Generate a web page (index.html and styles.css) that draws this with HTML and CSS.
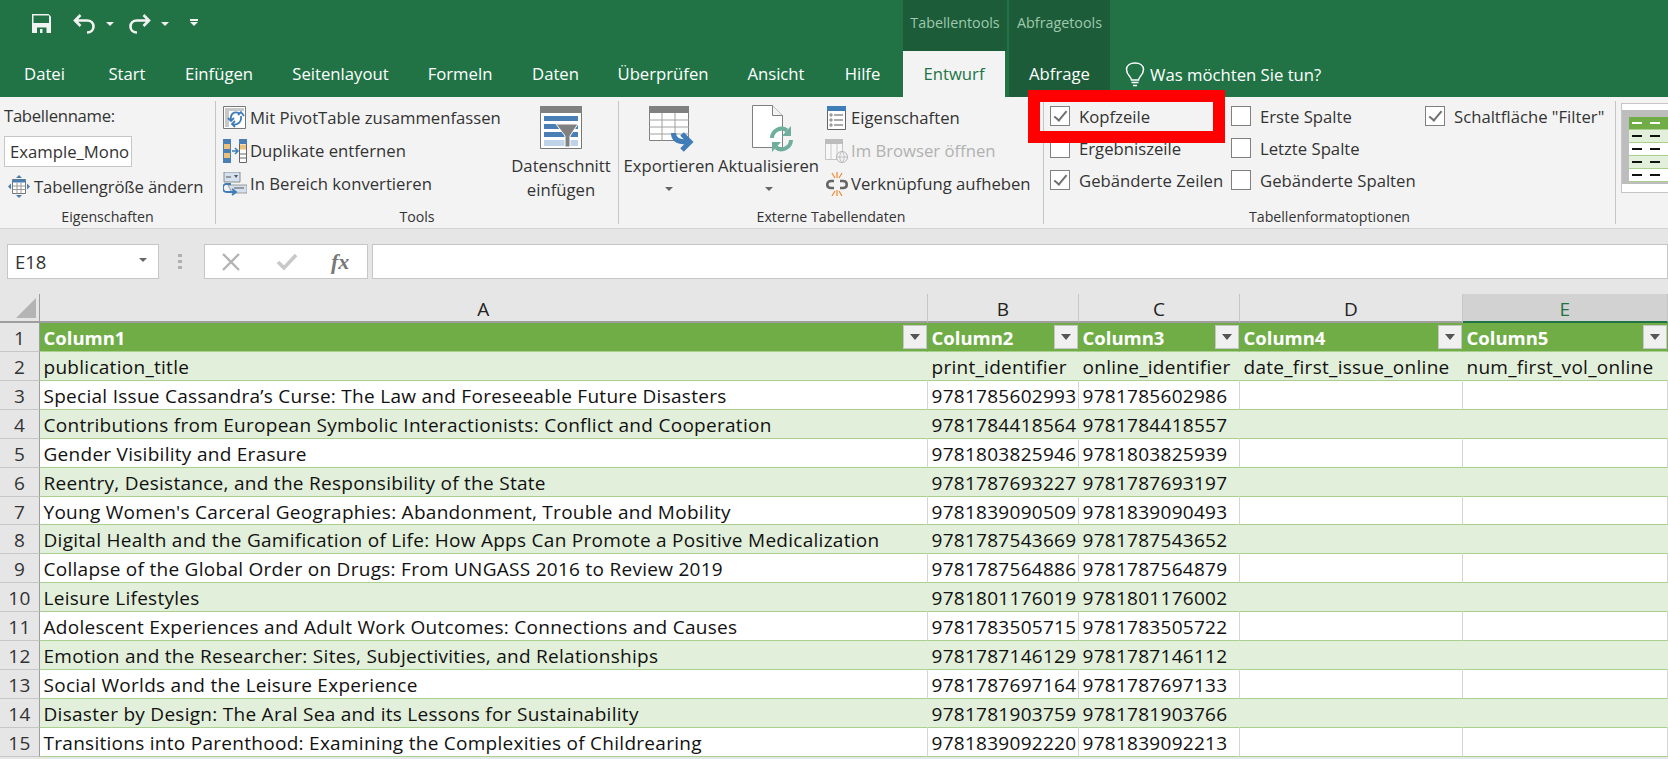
FILE: index.html
```html
<!DOCTYPE html>
<html>
<head>
    <title>Excel Tabellentools</title>
    <link rel="stylesheet" href="styles.css">
</head>
<body>

<div class="app">

    <!-- title bar -->
    <div class="titlebar">
        <div class="qat">
            <svg class="qat-save" width="19" height="19" viewBox="0 0 19 19"><path d="M0 0h16.500L19 2.500V19H0z" fill="#f2f2f2"/><path d="M1.500 1.500h15.500v7.500H1.500z" fill="#217346"/><path d="M5 13.500h9.500V19H5z" fill="#217346"/><path d="M8 15h2.500v4H8z" fill="#f2f2f2"/></svg>
            <svg class="qat-undo" width="23" height="20" viewBox="0 0 23 20"><path d="M7.500 1 2 6.500 7.500 12M2.500 6.500H14c4 0 6.500 2.500 6.500 6s-2.500 6-6.500 6" fill="none" stroke="#f2f2f2" stroke-width="2.600"/></svg>
            <span class="qat-caret"></span>
            <svg class="qat-redo" width="23" height="20" viewBox="0 0 23 20"><path d="M15.500 1 21 6.500 15.500 12M20.500 6.500H9c-4 0-6.500 2.500-6.500 6s2.500 6 6.500 6" fill="none" stroke="#f2f2f2" stroke-width="2.600"/></svg>
            <span class="qat-caret"></span>
            <span class="qat-more"></span>
        </div>
        <div class="ctx ctx-table">Tabellentools</div>
        <div class="ctx ctx-query">Abfragetools</div>
    </div>

    <!-- tabs -->
    <div class="tabs">
        <div class="tabs-main">
            <span class="tab">Datei</span>
            <span class="tab">Start</span>
            <span class="tab">Einfügen</span>
            <span class="tab">Seitenlayout</span>
            <span class="tab">Formeln</span>
            <span class="tab">Daten</span>
            <span class="tab">Überprüfen</span>
            <span class="tab">Ansicht</span>
            <span class="tab">Hilfe</span>
        </div>
        <span class="tab tab-active">Entwurf</span>
        <span class="tab tab-query">Abfrage</span>
        <svg class="bulb" width="20" height="25" viewBox="0 0 20 25"><path d="M6.500 18c0-3-5-5-5-10.500C1.500 3.500 5 1 10 1s8.500 2.500 8.500 6.500C18.500 13 13.500 15 13.500 18zM6.500 20.500h7M8 23.500h4" fill="none" stroke="#fff" stroke-width="1.500"/></svg>
        <span class="tell">Was möchten Sie tun?</span>
    </div>

    <!-- ribbon -->
    <div class="ribbon">
        <div class="group group-props">
            <div class="group-body stack">
                <div class="name-label">Tabellenname:</div>
                <div class="name-input">Example_Mono</div>
                <div class="cmd cmd-resize">
                    <svg width="22" height="23" viewBox="0 0 22 23"><path d="M11 0l3 3H8zM11 23l-3-3h6zM0 11.500l3-3v6zM22 11.500l-3 3v-6z" fill="#4a7fb5"/><path d="M4.500 4.500h13v14h-13z" fill="#fff" stroke="#777"/><path d="M4.500 4.500h13v3h-13z" fill="#4a7fb5"/><path d="M4.500 11h13M4.500 14.500h13M9 7.500v11M13 7.500v11" stroke="#999"/></svg>
                    <span>Tabellengröße ändern</span>
                </div>
            </div>
            <div class="group-label">Eigenschaften</div>
        </div>

        <div class="group group-tools">
            <div class="group-body row">
                <div class="cmd-list list-tools">
                    <div class="cmd">
                        <svg width="24" height="24" viewBox="0 0 24 24"><path d="M.5.500h22v22H.5z" fill="#fff" stroke="#777"/><path d="M2 2h19v3H2zM2 5h4v16H2z" fill="#c8c8c8"/><path d="M9 18c5 2 10-2 9-8M15 9l3-3 3 4M16 7c-5-2-9 1-8 7M5 12l3 3 3-3M12 15l-3 3 3 3" fill="none" stroke="#3f7cb8" stroke-width="1.800"/></svg>
                        <span>Mit PivotTable zusammenfassen</span>
                    </div>
                    <div class="cmd">
                        <svg width="24" height="24" viewBox="0 0 24 24"><path d="M0 0h8v24H0z" fill="#4a7fb5"/><path d="M1 5h6v5H1zM1 14h6v5H1z" fill="#e9c27e"/><path d="M16.500.500h7v23h-7z" fill="#fff" stroke="#666"/><path d="M16 0h8v5h-8z" fill="#4a7fb5"/><path d="M17 5.500h6v5h-6z" fill="#e9c27e"/><path d="M16 15h8M16 19h8" stroke="#666"/><path d="M9 12h5M12 9l3 3-3 3" fill="none" stroke="#3f7cb8" stroke-width="1.500"/></svg>
                        <span>Duplikate entfernen</span>
                    </div>
                    <div class="cmd">
                        <svg width="24" height="24" viewBox="0 0 24 24"><path d="M1 0h16v10H1z" fill="#d5e1ef" stroke="#777" stroke-width=".8"/><path d="M3 5h5" stroke="#555"/><path d="M11 3h4l-2 3z" fill="#555"/><path d="M5 13h19v8H9z" fill="#d5e1ef" stroke="#888" stroke-width=".8"/><path d="M11 16h10" stroke="#555"/><path d="M8 12H3c-2 0-3 2-3 4s1 4 4 4h9M9 17l4 3-4 3" fill="none" stroke="#3f7cb8" stroke-width="1.800"/></svg>
                        <span>In Bereich konvertieren</span>
                    </div>
                </div>
                <div class="big big-slicer">
                    <svg width="42" height="43" viewBox="0 0 42 43"><path d="M.5.500h41v42H.5z" fill="#fff" stroke="#777"/><path d="M0 0h42v7H0z" fill="#808080"/><path d="M4 10h34v5H4zM4 18h34v5H4zM4 26h34v5H4z" fill="#4a7fb5"/><path d="M4 34h34v6H4z" fill="#bfd3e8"/><path d="M16 18h22l-8 12v11h-5V30z" fill="#808080" stroke="#fff"/></svg>
                    <span class="big-text">Datenschnitt<br>einfügen</span>
                </div>
            </div>
            <div class="group-label">Tools</div>
        </div>

        <div class="group group-ext">
            <div class="group-body row">
                <div class="big big-export">
                    <svg width="45" height="46" viewBox="0 0 45 46"><path d="M.5.500h39v34H.5z" fill="#fff" stroke="#808080"/><path d="M0 0h40v7H0z" fill="#808080"/><path d="M0 14h40M0 21h40M0 28h40M13 7v28M26 7v28" stroke="#a0a0a0"/><path d="M24.500 27c0 6 4 9 13 9" fill="none" stroke="#3f7cb8" stroke-width="5"/><path d="M33 28l8 8-8 8" fill="none" stroke="#3f7cb8" stroke-width="5"/></svg>
                    <span class="big-text">Exportieren</span>
                    <span class="caret"></span>
                </div>
                <div class="big big-refresh">
                    <svg width="41" height="47" viewBox="0 0 41 47"><path d="M.5.500h20l10 10v32H.5z" fill="#fff" stroke="#808080"/><path d="M20.500.500v10h10" fill="#f3f3f3" stroke="#808080"/><path d="M20 33a9.500 9.500 0 0 1 15-7.500M39 35a9.500 9.500 0 0 1-15 7.500" fill="none" stroke="#6fae9c" stroke-width="4"/><path d="M39 21v10h-9zM20 47V37h9z" fill="#6fae9c"/></svg>
                    <span class="big-text">Aktualisieren</span>
                    <span class="caret"></span>
                </div>
                <div class="cmd-list list-ext">
                    <div class="cmd">
                        <svg width="24" height="24" viewBox="0 0 20 24"><path d="M.5.500h18v23H.5z" fill="#fff" stroke="#666"/><path d="M0 0h19v5H0z" fill="#3f7cb8"/><path d="M7 9h9M7 14h9M7 19h9" stroke="#555"/><path d="M3 8h2v2H3zM3 13h2v2H3zM3 18h2v2H3z" fill="#fff" stroke="#555" stroke-width=".7"/></svg>
                        <span>Eigenschaften</span>
                    </div>
                    <div class="cmd cmd-off">
                        <svg width="24" height="24" viewBox="0 0 24 24"><path d="M.5.500h17v20H.5z" fill="#f7f7f7" stroke="#c4c4c4"/><path d="M0 0h18v5H0z" fill="#bdbdbd"/><path d="M6 5v16M12 5v16" stroke="#c9c9c9"/><circle cx="17" cy="18" r="5.500" fill="#f3f3f3" stroke="#b5b5b5"/><path d="M11.500 18h11M17 12.500c-3 3-3 8 0 11M17 12.500c3 3 3 8 0 11" fill="none" stroke="#b5b5b5" stroke-width=".8"/></svg>
                        <span>Im Browser öffnen</span>
                    </div>
                    <div class="cmd">
                        <svg width="24" height="24" viewBox="0 0 24 24"><path d="M9 9H6C1 9 1 16 6 16h3M15 9h3c5 0 5 7 0 7h-3" fill="none" stroke="#666" stroke-width="2.600"/><path d="M7 1l3 5M12 0v6M17 1l-3 5M7 24l3-5M12 24v-6M17 24l-3-5" stroke="#ec8a2e" stroke-width="1.200"/></svg>
                        <span>Verknüpfung aufheben</span>
                    </div>
                </div>
            </div>
            <div class="group-label">Externe Tabellendaten</div>
        </div>

        <div class="group group-opts">
            <div class="group-body opts">
                <label class="opt"><span class="box box-on"></span>Kopfzeile</label>
                <label class="opt"><span class="box"></span>Erste Spalte</label>
                <label class="opt"><span class="box box-on"></span>Schaltfläche "Filter"</label>
                <label class="opt"><span class="box"></span>Ergebniszeile</label>
                <label class="opt"><span class="box"></span>Letzte Spalte</label>
                <span></span>
                <label class="opt"><span class="box box-on"></span>Gebänderte Zeilen</label>
                <label class="opt"><span class="box"></span>Gebänderte Spalten</label>
            </div>
            <div class="group-label">Tabellenformatoptionen</div>
        </div>

        <div class="gallery">
            <div class="mini">
                <div class="mini-row mini-head"><i></i><i></i></div>
                <div class="mini-row mini-band"><i></i><i></i></div>
                <div class="mini-row"><i></i><i></i></div>
                <div class="mini-row mini-band"><i></i><i></i></div>
                <div class="mini-row"><i></i><i></i></div>
            </div>
        </div>

        <div class="red-mark"></div>
    </div>

    <!-- formula bar -->
    <div class="formula">
        <div class="namebox">E18<span class="caret"></span></div>
        <div class="grip"></div>
        <div class="fx-box">
            <svg width="20" height="18" viewBox="0 0 20 18"><path d="M2 1l16 16M18 1 2 17" stroke="#b3b3b3" stroke-width="2.400"/></svg>
            <svg width="22" height="18" viewBox="0 0 22 18"><path d="M2 9l6 6L20 2" fill="none" stroke="#c8c8c8" stroke-width="3.600"/></svg>
            <span class="fx">fx</span>
        </div>
        <div class="formula-input"></div>
    </div>

    <!-- sheet -->
    <div class="sheet">
        <div class="row-line col-heads">
            <div class="corner"><span class="corner-mark"></span></div>
            <div class="col-head">A</div>
            <div class="col-head">B</div>
            <div class="col-head">C</div>
            <div class="col-head">D</div>
            <div class="col-head col-sel">E</div>
        </div>
        <div class="row-line table-head">
            <div class="row-num">1</div>
            <div class="cell">Column1<span class="filter"></span></div>
            <div class="cell">Column2<span class="filter"></span></div>
            <div class="cell">Column3<span class="filter"></span></div>
            <div class="cell">Column4<span class="filter"></span></div>
            <div class="cell">Column5<span class="filter"></span></div>
        </div>
        <div class="row-line band">
            <div class="row-num">2</div>
            <div class="cell">publication_title</div>
            <div class="cell">print_identifier</div>
            <div class="cell">online_identifier</div>
            <div class="cell">date_first_issue_online</div>
            <div class="cell">num_first_vol_online</div>
        </div>
        <div class="row-line">
            <div class="row-num">3</div>
            <div class="cell">Special Issue Cassandra’s Curse: The Law and Foreseeable Future Disasters</div>
            <div class="cell">9781785602993</div>
            <div class="cell">9781785602986</div>
            <div class="cell"></div>
            <div class="cell"></div>
        </div>
        <div class="row-line band">
            <div class="row-num">4</div>
            <div class="cell">Contributions from European Symbolic Interactionists: Conflict and Cooperation</div>
            <div class="cell">9781784418564</div>
            <div class="cell">9781784418557</div>
            <div class="cell"></div>
            <div class="cell"></div>
        </div>
        <div class="row-line">
            <div class="row-num">5</div>
            <div class="cell">Gender Visibility and Erasure</div>
            <div class="cell">9781803825946</div>
            <div class="cell">9781803825939</div>
            <div class="cell"></div>
            <div class="cell"></div>
        </div>
        <div class="row-line band">
            <div class="row-num">6</div>
            <div class="cell">Reentry, Desistance, and the Responsibility of the State</div>
            <div class="cell">9781787693227</div>
            <div class="cell">9781787693197</div>
            <div class="cell"></div>
            <div class="cell"></div>
        </div>
        <div class="row-line">
            <div class="row-num">7</div>
            <div class="cell">Young Women's Carceral Geographies: Abandonment, Trouble and Mobility</div>
            <div class="cell">9781839090509</div>
            <div class="cell">9781839090493</div>
            <div class="cell"></div>
            <div class="cell"></div>
        </div>
        <div class="row-line band">
            <div class="row-num">8</div>
            <div class="cell">Digital Health and the Gamification of Life: How Apps Can Promote a Positive Medicalization</div>
            <div class="cell">9781787543669</div>
            <div class="cell">9781787543652</div>
            <div class="cell"></div>
            <div class="cell"></div>
        </div>
        <div class="row-line">
            <div class="row-num">9</div>
            <div class="cell">Collapse of the Global Order on Drugs: From UNGASS 2016 to Review 2019</div>
            <div class="cell">9781787564886</div>
            <div class="cell">9781787564879</div>
            <div class="cell"></div>
            <div class="cell"></div>
        </div>
        <div class="row-line band">
            <div class="row-num">10</div>
            <div class="cell">Leisure Lifestyles</div>
            <div class="cell">9781801176019</div>
            <div class="cell">9781801176002</div>
            <div class="cell"></div>
            <div class="cell"></div>
        </div>
        <div class="row-line">
            <div class="row-num">11</div>
            <div class="cell">Adolescent Experiences and Adult Work Outcomes: Connections and Causes</div>
            <div class="cell">9781783505715</div>
            <div class="cell">9781783505722</div>
            <div class="cell"></div>
            <div class="cell"></div>
        </div>
        <div class="row-line band">
            <div class="row-num">12</div>
            <div class="cell">Emotion and the Researcher: Sites, Subjectivities, and Relationships</div>
            <div class="cell">9781787146129</div>
            <div class="cell">9781787146112</div>
            <div class="cell"></div>
            <div class="cell"></div>
        </div>
        <div class="row-line">
            <div class="row-num">13</div>
            <div class="cell">Social Worlds and the Leisure Experience</div>
            <div class="cell">9781787697164</div>
            <div class="cell">9781787697133</div>
            <div class="cell"></div>
            <div class="cell"></div>
        </div>
        <div class="row-line band">
            <div class="row-num">14</div>
            <div class="cell">Disaster by Design: The Aral Sea and its Lessons for Sustainability</div>
            <div class="cell">9781781903759</div>
            <div class="cell">9781781903766</div>
            <div class="cell"></div>
            <div class="cell"></div>
        </div>
        <div class="row-line">
            <div class="row-num">15</div>
            <div class="cell">Transitions into Parenthood: Examining the Complexities of Childrearing</div>
            <div class="cell">9781839092220</div>
            <div class="cell">9781839092213</div>
            <div class="cell"></div>
            <div class="cell"></div>
        </div>
    </div>
</div>

</body>
</html>
```

FILE: styles.css
```css
/* Excel window, 1668 x 759 */
html, body {
    margin: 0;
    height: 100%;
    overflow: hidden;
}
.app {
    width: 1668px;
    height: 759px;
    overflow: hidden;
    background: #e6e6e6;
    color: #333;
    font-family: "Open Sans", sans-serif;
    font-size: 16.7px;
}

/* title bar */
.titlebar {
    display: flex;
    height: 51px;
    background: #217346;
}
.qat {
    width: 903px;
    display: flex;
    align-items: flex-start;
    padding-left: 32px;
    padding-top: 14px;
    box-sizing: border-box;
}
.qat-undo { margin-left: 22px; }
.qat-redo { margin-left: 14px; }
.qat-caret {
    width: 0;
    height: 0;
    margin: 8px 0 0 10px;
    border-left: 4px solid transparent;
    border-right: 4px solid transparent;
    border-top: 4px solid #f2f2f2;
}
.qat-more {
    width: 8px;
    height: 2px;
    margin: 5px 0 0 21px;
    background: #f2f2f2;
    position: relative;
}
.qat-more::after {
    content: "";
    position: absolute;
    left: 0;
    top: 3px;
    border-left: 4px solid transparent;
    border-right: 4px solid transparent;
    border-top: 4px solid #f2f2f2;
}
.ctx {
    padding-top: 13px;
    text-align: center;
    background: #1c5c39;
    color: #9fc9ae;
    font-size: 14.3px;
    box-sizing: border-box;
}
.ctx-table { width: 104px; }
.ctx-query { width: 101px; margin-left: 2px; }

/* tabs */
.tabs {
    display: flex;
    align-items: center;
    height: 46px;
    background: #217346;
    color: #fff;
}
.tabs-main {
    display: grid;
    grid-template-columns: 81px 84px 100px 143px 96px 95px 120px 106px 67px;
    width: 903px;
    padding-left: 4px;
    box-sizing: border-box;
}
.tab {
    height: 46px;
    line-height: 46px;
    text-align: center;
    white-space: nowrap;
}
.tab-active {
    width: 102px;
    background: #f3f3f3;
    color: #217346;
}
.tab-query {
    width: 101px;
    margin-left: 4px;
    background: #1c5c39;
}
.bulb { margin-left: 15px; }
.tell { margin-left: 5px; }

/* ribbon */
.ribbon {
    position: relative;
    display: flex;
    height: 131px;
    background: #f3f3f3;
    border-bottom: 1px solid #d2d2d2;
}
.group {
    display: flex;
    flex-direction: column;
    margin-top: 4px;
    height: 123px;
    border-right: 1px solid #c6c6c6;
    box-sizing: border-box;
}
.group-props { width: 216px; }
.group-tools { width: 403px; }
.group-ext { width: 425px; }
.group-opts { width: 572px; }
.group-body {
    flex: 1;
    min-height: 0;
}
.group-label {
    height: 22px;
    line-height: 30px;
    text-align: center;
    font-size: 14.2px;
}
.stack { padding-left: 4px; }
.row { display: flex; }
.name-label {
    margin-top: 3px;
    height: 32px;
    line-height: 24px;
    letter-spacing: -.3px;
}
.name-input {
    width: 128px;
    height: 31px;
    line-height: 29px;
    padding-left: 5px;
    box-sizing: border-box;
    background: #fff;
    border: 1px solid #c6c6c6;
    white-space: nowrap;
    overflow: hidden;
}
.cmd {
    display: flex;
    align-items: center;
    height: 33px;
    gap: 3px;
    white-space: nowrap;
}
.cmd-resize {
    margin: 3px 0 0 4px;
    gap: 4px;
    letter-spacing: -.15px;
}
.cmd-off { color: #b1b1b1; }
.list-tools {
    flex: none;
    width: 295px;
    padding-left: 7px;
    box-sizing: border-box;
}
.list-ext { padding-left: 7px; }
.list-ext .cmd { gap: 2px; }
.big {
    flex: none;
    display: flex;
    flex-direction: column;
    align-items: center;
    padding-top: 5px;
    text-align: center;
    white-space: nowrap;
}
.big-text { line-height: 24px; }
.big-slicer { width: 100px; }
.big-slicer svg { margin-bottom: 5px; }
.big-export { width: 100px; }
.big-export svg { margin: 0 0 2px 5px; }
.big-refresh { width: 99px; }
.big-refresh svg { margin: -1px 0 2px 7px; }
.caret {
    display: block;
    width: 0;
    height: 0;
    margin-top: 9px;
    border-left: 4px solid transparent;
    border-right: 4px solid transparent;
    border-top: 4px solid #666;
}

/* table style options */
.opts {
    display: grid;
    grid-template-columns: 181px 194px 1fr;
    grid-auto-rows: 32px;
    margin-top: -1px;
    padding: 0 0 0 6px;
}
.opt {
    display: flex;
    align-items: center;
    gap: 9px;
    white-space: nowrap;
}
.box {
    width: 20px;
    height: 20px;
    box-sizing: border-box;
    background: #fff;
    border: 1px solid #808080;
}
.box-on {
    position: relative;
}
.box-on::after {
    content: "";
    position: absolute;
    left: 6px;
    top: 1px;
    width: 5px;
    height: 11px;
    border-right: 2px solid #707070;
    border-bottom: 2px solid #707070;
    transform: rotate(40deg);
}

/* style gallery */
.gallery {
    flex: 1;
    height: 90px;
    margin: 6px 0 0 5px;
    padding: 6px 0;
    box-sizing: border-box;
    background: #fff;
    border: 1px solid #c6c6c6;
    border-right: none;
}
.mini {
    height: 74px;
    padding: 7px 0 0 7px;
    box-sizing: border-box;
    background: #bdbdbd;
}
.mini-row {
    display: flex;
    align-items: center;
    gap: 8px;
    height: 13px;
    padding-left: 3px;
    background: #fff;
    border-bottom: 1px solid #a9d08e;
    box-sizing: border-box;
}
.mini-row i {
    width: 10px;
    height: 1.500px;
    background: #111;
}
.mini-band { background: #e2efda; }
.mini-head { background: #70ad47; }
.mini-head i { background: #fff; }

/* screenshot annotation */
.red-mark {
    position: absolute;
    left: 1028px;
    top: -7px;
    width: 197px;
    height: 53px;
    box-sizing: border-box;
    border: solid #ff0000;
    border-width: 12px;
}

/* formula bar */
.formula {
    display: flex;
    align-items: center;
    height: 65px;
    padding: 15px 0 15px 7px;
    box-sizing: border-box;
    background: #e6e6e6;
}
.namebox {
    position: relative;
    width: 152px;
    height: 35px;
    line-height: 33px;
    padding-left: 7px;
    box-sizing: border-box;
    background: #fff;
    border: 1px solid #c6c6c6;
    font-size: 18.5px;
}
.namebox .caret {
    position: absolute;
    right: 11px;
    top: 4px;
}
.grip {
    width: 4px;
    height: 15px;
    margin: 0 22px 0 19px;
    background: repeating-linear-gradient(#b0b0b0 0 3px, transparent 3px 6px);
}
.fx-box {
    display: flex;
    align-items: center;
    width: 164px;
    height: 35px;
    padding-left: 16px;
    gap: 35px;
    box-sizing: border-box;
    background: #fff;
    border: 1px solid #c6c6c6;
}
.fx {
    margin-left: -2px;
    font-family: "Liberation Serif", serif;
    font-style: italic;
    font-weight: bold;
    font-size: 22px;
    color: #777;
}
.formula-input {
    flex: 1;
    height: 35px;
    margin-left: 4px;
    box-sizing: border-box;
    background: #fff;
    border: 1px solid #c6c6c6;
}

/* sheet */
.sheet {
    font-size: 19px;
    letter-spacing: .28px;
    color: #111;
}
.row-line {
    display: grid;
    grid-template-columns: 40px 888px 151px 161px 223px 205px;
    height: 28.930px;
    background: #fff;
}
.col-heads { height: 29px; background: #e6e6e6; }
.corner {
    position: relative;
    border-right: 1px solid #9e9e9e;
    border-bottom: 2px solid #9e9e9e;
}
.corner-mark {
    position: absolute;
    right: 3px;
    bottom: 3px;
    width: 0;
    height: 0;
    border-left: 20px solid transparent;
    border-bottom: 20px solid #b4b4b4;
}
.col-head {
    border-right: 1px solid #c6c6c6;
    border-bottom: 2px solid #9e9e9e;
    line-height: 30px;
    text-align: center;
    color: #222;
    overflow: hidden;
}
.col-sel {
    background: #d2d2d2;
    border-bottom-color: #217346;
    color: #217346;
}
.row-num {
    background: #e6e6e6;
    border-right: 1px solid #9e9e9e;
    border-bottom: 1px solid #c6c6c6;
    line-height: 30px;
    text-align: center;
    color: #333;
    overflow: hidden;
}
.cell {
    position: relative;
    padding-left: 3.500px;
    border-right: 1px solid #d4d4d4;
    border-bottom: 1px solid #a9d08e;
    line-height: 30px;
    white-space: nowrap;
    overflow: hidden;
}
.band .cell {
    background: #e2efda;
    border-right-color: #e2efda;
}
.table-head .cell {
    background: #70ad47;
    border-right-color: #70ad47;
    color: #fff;
    font-weight: bold;
    font-size: 18.5px;
    letter-spacing: 0;
}
.filter {
    position: absolute;
    right: 0;
    top: 2px;
    width: 24px;
    height: 24px;
    box-sizing: border-box;
    background: #f0f0f0;
    border: 1px solid #c6c6c6;
}
.filter::after {
    content: "";
    position: absolute;
    left: 6px;
    top: 8px;
    border-left: 5px solid transparent;
    border-right: 5px solid transparent;
    border-top: 6px solid #555;
}
```
